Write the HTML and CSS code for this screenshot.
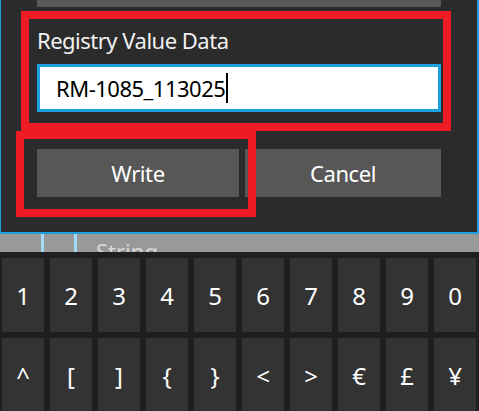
FILE: index.html
```html
<!DOCTYPE html>
<html lang="en">
  <head>
    <meta charset="UTF-8" />
    <meta name="viewport" content="width=device-width, initial-scale=1.0" />
    <title>Registry Value Data</title>
    <link rel="stylesheet" href="styles.css">
  </head>
  <body>
    <div class="dialog">
      <div class="prev-field"></div>
      <div class="label">Registry Value Data</div>
      <div class="input">RM-1085_113025<span class="caret"></span></div>
      <div class="buttons">
        <div class="btn">Write</div>
        <div class="btn">Cancel</div>
      </div>

      <!-- red annotation boxes -->
      <div class="mark mark-field"></div>
      <div class="mark mark-write"></div>
    </div>

    <div class="behind">
      <span class="line"></span>
      <span class="line second"></span>
      <span class="behind-text">String</span>
    </div>

    <div class="keyboard">
      <div class="key">1</div>
      <div class="key">2</div>
      <div class="key">3</div>
      <div class="key">4</div>
      <div class="key">5</div>
      <div class="key">6</div>
      <div class="key">7</div>
      <div class="key">8</div>
      <div class="key">9</div>
      <div class="key">0</div>
      <div class="key">^</div>
      <div class="key">[</div>
      <div class="key">]</div>
      <div class="key">{</div>
      <div class="key">}</div>
      <div class="key">&lt;</div>
      <div class="key">&gt;</div>
      <div class="key">€</div>
      <div class="key">£</div>
      <div class="key">¥</div>
    </div>
  </body>
</html>
```

FILE: styles.css
```css
body {
  margin: 0;
  width: 479px;
  height: 411px;
  overflow: hidden;
  background: #1f1f1f;
  font-family: "Noto Sans", "Open Sans", sans-serif;
  color: #fff;
}

/* Dialog */
.dialog {
  position: relative;
  height: 232px;
  padding: 0 36px;
  background: #2b2b2b;
  border-left: 1px solid #1ba1e2;
  border-right: 2px solid #1ba1e2;
  border-bottom: 2px solid #1ba1e2;
}

.prev-field {
  height: 7px;
  background: #595959;
}

.label {
  margin-top: 18px;
  font-size: 22px;
  letter-spacing: -0.5px;
  line-height: 30px;
  color: #f2f2f2;
}

.input {
  margin-top: 9px;
  height: 42px;
  border: 3px solid #1ba1e2;
  background: #fff;
  color: #000;
  padding-left: 16px;
  font-size: 22px;
  letter-spacing: -0.5px;
  line-height: 42px;
  display: flex;
  align-items: center;
}

.caret {
  display: inline-block;
  width: 2px;
  height: 30px;
  margin-left: 1px;
  background: #000;
}

.buttons {
  margin-top: 37px;
  display: grid;
  grid-template-columns: 202px 196px;
  gap: 6px;
}

.btn {
  height: 48px;
  background: #575757;
  font-size: 22px;
  letter-spacing: -0.4px;
  line-height: 48px;
  text-align: center;
}

/* Red highlight boxes */
.mark {
  position: absolute;
  border: 8px solid #ed1c24;
}

.mark-field {
  left: 20px;
  top: 11px;
  width: 414px;
  height: 104px;
}

.mark-write {
  left: 15px;
  top: 131px;
  width: 224px;
  height: 70px;
}

/* Page behind the dialog */
.behind {
  height: 18px;
  overflow: hidden;
  background: #999;
  display: flex;
  padding-left: 41px;
}

.line {
  width: 3px;
  background: #9fdaf7;
}

.line.second {
  margin-left: 30px;
}

.behind-text {
  margin-left: 19px;
  padding-top: 2px;
  font-size: 22px;
  line-height: 30px;
  color: #d8d8d8;
}

/* Keyboard */
.keyboard {
  padding: 6px 3px 0 2px;
  display: grid;
  grid-template-columns: repeat(10, 42px);
  grid-auto-rows: 74px;
  gap: 6px;
}

.key {
  background: #333;
  font-size: 24px;
  display: flex;
  align-items: center;
  justify-content: center;
}
```
